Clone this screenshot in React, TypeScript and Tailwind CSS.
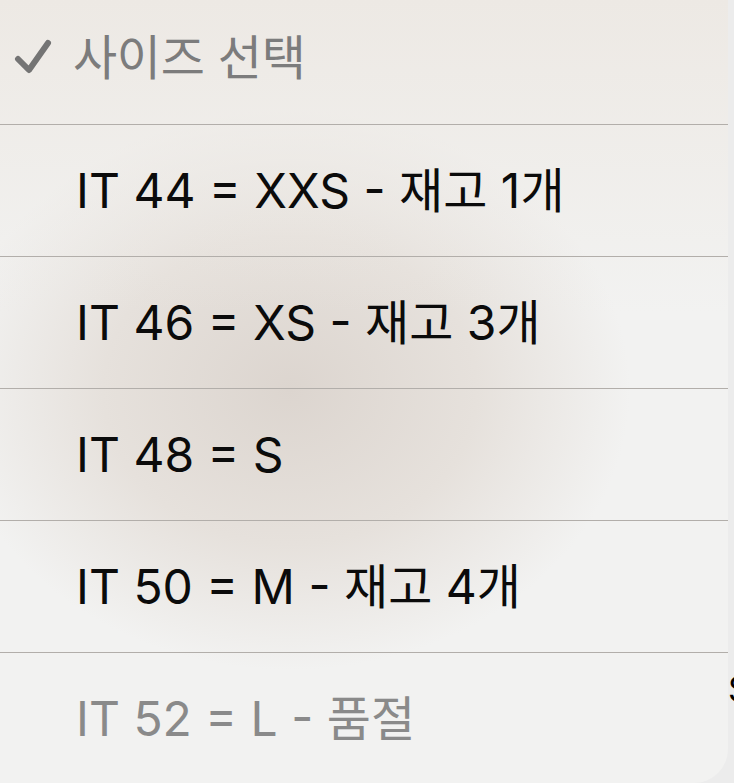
import React from 'react';

interface SizeOption {
  label: string;
  soldOut?: boolean;
}

const OPTIONS: SizeOption[] = [
  { label: 'IT 44 = XXS - 재고 1개' },
  { label: 'IT 46 = XS - 재고 3개' },
  { label: 'IT 48 = S' },
  { label: 'IT 50 = M - 재고 4개' },
  { label: 'IT 52 = L - 품절', soldOut: true },
];

const FONT = "[font-family:Inter,'Noto_Sans_CJK_KR',sans-serif]";

function Check() {
  return (
    <svg width="40" height="40" viewBox="0 0 40 40" className="shrink-0">
      <path
        d="M4 21 L15 32 L34 5"
        fill="none"
        stroke="#747474"
        strokeWidth="6"
        strokeLinecap="round"
        strokeLinejoin="round"
      />
    </svg>
  );
}

export default function App() {
  return (
    <div className={`h-[783px] w-[734px] overflow-hidden bg-[#ececec] flex ${FONT}`}>
      {/* picker menu */}
      <div className="relative w-[728px] h-full rounded-br-[34px] overflow-hidden bg-[#f2f2f1]">
        <div className="absolute inset-0 bg-[radial-gradient(ellipse_340px_280px_at_290px_390px,#dcd5cf_0%,#e6e1dc_55%,rgba(242,242,241,0)_100%)]" />
        <div className="absolute inset-0 bg-[linear-gradient(to_bottom,#ede9e4_0%,rgba(237,233,228,0)_40%)]" />
        <div className="relative flex flex-col">
          <div className="h-[124px] flex items-center pl-[14px] gap-[19px] pb-[8px]">
            <Check />
            <span className="text-[48px] leading-none text-[#7c7c7c] tracking-[-0.3px]">사이즈 선택</span>
          </div>
          {OPTIONS.map((opt) => (
            <div key={opt.label} className="h-[132px] border-t border-[#b2aeaa] flex items-center pl-[76px]">
              <span
                className={
                  'text-[48px] leading-none tracking-normal ' +
                  (opt.soldOut ? 'text-[#8a8a8a]' : 'text-[#0b0b0b]')
                }
              >
                {opt.label}
              </span>
            </div>
          ))}
        </div>
      </div>
      <div className="flex-1 relative">
        <span className="absolute left-0 top-[672px] text-[34px] leading-none text-black">S</span>
      </div>
    </div>
  );
}
